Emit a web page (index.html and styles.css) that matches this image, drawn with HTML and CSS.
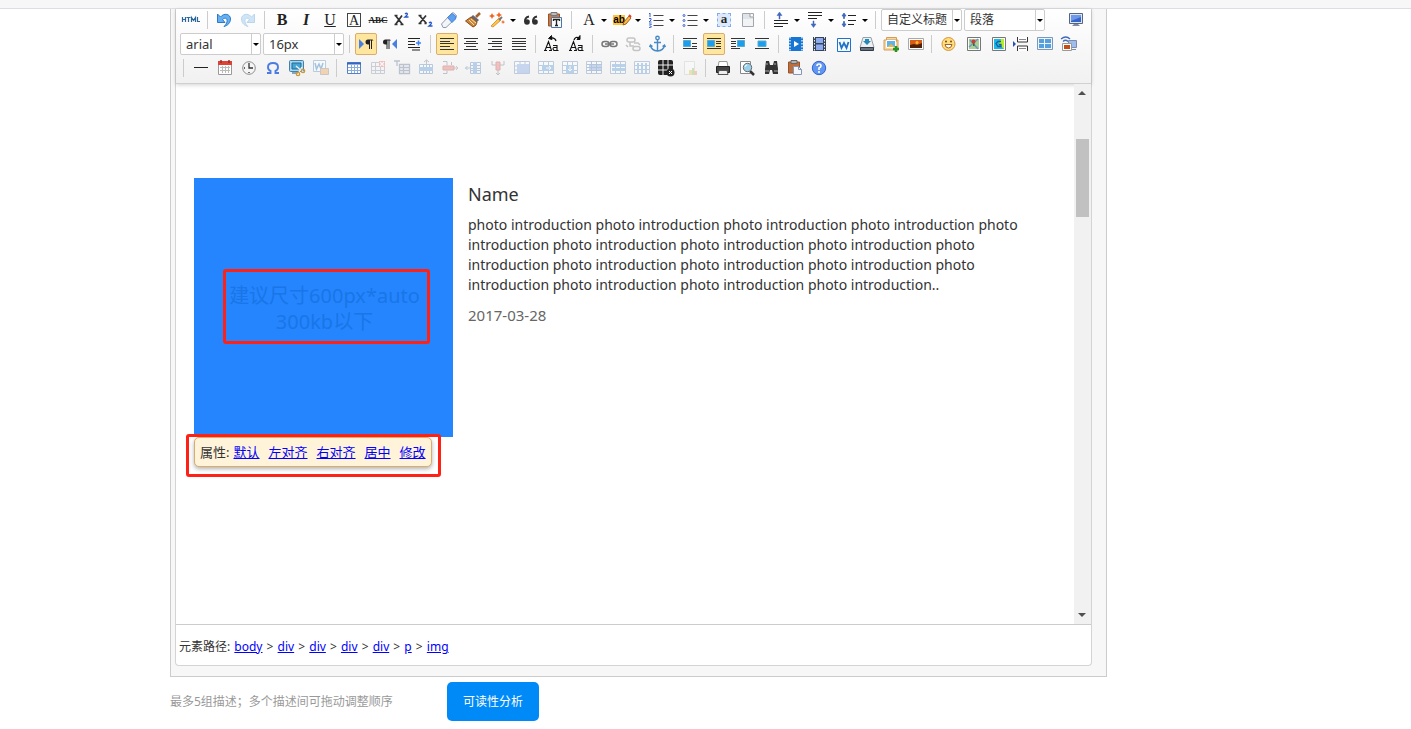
FILE: index.html
```html
<!DOCTYPE html>
<html lang="zh-CN">
<head>
<meta charset="utf-8">
<title>编辑器</title>
<link rel="stylesheet" href="styles.css">
</head>
<body>
<div class="topbar"></div>
<main class="page">
<div class="frame">
<div class="editor">
<div class="toolbar" role="toolbar">
<div class="row">
<button class="tool" aria-label="HTML"><svg viewBox="0 0 20 20" fill="none" stroke="#2a659c" stroke-width="1.2"><path d="M1.5 7v5M4.500 7v5M1.500 9.500h3M5.500 7.500h4M7.500 7.500v4.500M10.500 12V7.500l2 3 2-3V12M16.500 7v4.500H19"/></svg></button>
<i class="sep"></i>
<button class="tool" aria-label="撤销"><svg viewBox="0 0 20 20"><path d="M3.500 4v8.500h7.500l-2.500-3c3-2.500 5-1 4.500 2-.2 2-1.500 3.500-3 5 4-1 6.500-4 6.500-7.500C16.500 4 10 2.500 6.500 7z" fill="#64b0f0" stroke="#2d79c7"/></svg></button>
<button class="tool faint" aria-label="重做"><svg viewBox="0 0 20 20"><path d="M16.500 4v8.500H9l2.500-3c-3-2.500-5-1-4.500 2 .2 2 1.500 3.500 3 5-4-1-6.500-4-6.500-7.500C3.500 4 10 2.500 13.500 7z" fill="#8bc3f0" stroke="#5a9bd6"/></svg></button>
<i class="sep"></i>
<button class="tool glyph bold">B</button>
<button class="tool glyph italic">I</button>
<button class="tool glyph under">U</button>
<button class="tool glyph"><span class="boxed">A</span></button>
<button class="tool glyph strike">ABC</button>
<button class="tool" aria-label="上标"><svg viewBox="0 0 20 20" fill="none"><path d="M4.500 5.500l7 9M11 5.500l-6.500 9M3.500 5.500h3M3.500 14.500h3M9.500 14.500h3" stroke="#333" stroke-width="1.700"/><path d="M14 4q1.500-1.500 2.500 0 0 1-2.500 3h3.500" stroke="#2757c5" stroke-width="1.300"/></svg></button>
<button class="tool" aria-label="下标"><svg viewBox="0 0 20 20" fill="none"><path d="M4.500 5.500l7 8M11 5.500l-6.500 8M3.500 5.500h3M3.500 13.500h3M9.500 13.500h2" stroke="#333" stroke-width="1.700"/><path d="M14 13q1.500-1.500 2.500 0 0 1-2.500 3h3.500" stroke="#2757c5" stroke-width="1.300"/></svg></button>
<button class="tool" aria-label="清除格式"><svg viewBox="0 0 20 20"><path d="M2.500 14L12 4l2-1.500 3.500 3-1 3L7 17.500H4z" fill="#f5f5f7" stroke="#8c9ab4"/><path d="M8.500 7.500L13 3.500l4 3-.5 2.500-3.500 3.500z" fill="#5f9ff0" stroke="#4a83d5"/></svg></button>
<button class="tool" aria-label="格式刷"><svg viewBox="0 0 20 20"><path d="M17 3l-4 4" stroke="#a5622c" stroke-width="2.500"/><path d="M10 5l6 5-2 2-6-5z" fill="#656773"/><path d="M8 7L2.500 11l7.500 6c3-1 3.500-3 4-5z" fill="#c8863d" stroke="#8b4b17"/><path d="M6 10l5 5M8 9l5 4" stroke="#ffe0a0"/></svg></button>
<button class="tool" aria-label="自动排版"><svg viewBox="0 0 20 20"><path d="M4 16l2 1 8-7-2-2z" fill="#ffc640" stroke="#d9964c"/><path d="M12 10l3-3" stroke="#777" stroke-width="2"/><path d="M5 3l1 2 2 1-2 1-1 2-1-2-2-1 2-1zM12 2l1 2 2 1-2 1-1 2-1-2-2-1 2-1zM16 10l.7 1.500 1.500.5-1.500.7L16 14l-.7-1.500-1.500-.5 1.500-.5z" fill="#f36221"/></svg></button><button class="caret" aria-label="更多"></button>
<button class="tool" aria-label="引用"><svg viewBox="0 0 20 20"><g fill="#303030"><circle cx="6" cy="12" r="2.800"/><circle cx="14" cy="12" r="2.800"/></g><path d="M4 12q-.5-4.500 4-5.500M12 12q-.5-4.500 4-5.500" fill="none" stroke="#303030" stroke-width="1.800"/></svg></button>
<button class="tool" aria-label="纯文本粘贴"><svg viewBox="0 0 20 20"><path d="M3.500 4h11v12h-11z" fill="#c77a43" stroke="#995326"/><path d="M6 2.500h6v3H6z" fill="#bbb" stroke="#777"/><path d="M6.500 7.500h10v10h-10z" fill="#f6fbff" stroke="#4b75aa"/><path d="M8.500 11V9.500h6V11M11.500 9.500v6M10 15.500h3" fill="none" stroke="#222" stroke-width="1.300"/></svg></button>
<i class="sep"></i>
<button class="tool glyph">A</button><button class="caret" aria-label="字体颜色"></button>
<button class="tool mark" aria-label="背景色"><span class="ab">ab</span><svg viewBox="0 0 20 20"><path d="M11 15l1-3 5-6 2 2-5 6z" fill="#f6bb48" stroke="#a86020"/><path d="M17 5l2 2" stroke="#e14128" stroke-width="2"/></svg></button><button class="caret" aria-label="更多"></button>
<button class="tool" aria-label="有序列表"><svg viewBox="0 0 20 20" fill="none"><path d="M7.500 5.500h10M7.500 10.500h10M7.500 15.500h10" stroke="#444"/><path d="M3 4l1-1v4M3 8.500h2v1.500L3 12h2.500M3 14h2.500l-1.500 1.500L5.500 17 3 17.500" stroke="#3260d0"/></svg></button><button class="caret" aria-label="更多"></button>
<button class="tool" aria-label="无序列表"><svg viewBox="0 0 20 20" fill="none"><path d="M7.500 5.500h10M7.500 10.500h10M7.500 15.500h10" stroke="#444"/><g stroke="#4064d5"><circle cx="4" cy="5.500" r="1"/><circle cx="4" cy="10.500" r="1"/><circle cx="4" cy="15.500" r="1"/></g></svg></button><button class="caret" aria-label="更多"></button>
<button class="tool mark" aria-label="全选"><span class="all">a</span></button>
<button class="tool" aria-label="清空文档"><svg viewBox="0 0 20 20"><path d="M4.500 3.500h11v13h-11z" fill="#f2f3f5" stroke="#a2a7af"/><path d="M5 4h7v4h3v1H5z" fill="#dfe3ea"/><path d="M12 3v4h4" fill="#fff" stroke="#999"/></svg></button>
<i class="sep"></i>
<button class="tool" aria-label="段前距"><svg viewBox="0 0 20 20"><path d="M8.500 2l2.500 3.500H9V9H8V5.500H6z" fill="#4167bd" stroke="#4167bd" stroke-width=".5"/><path d="M3 10.500h14M3 13.500h14M3 16.500h9" stroke="#222" stroke-width="1.200"/></svg></button><button class="caret" aria-label="更多"></button>
<button class="tool" aria-label="段后距"><svg viewBox="0 0 20 20"><path d="M3 2.500h14M3 5.500h14M3 8.500h9" stroke="#222" stroke-width="1.200"/><path d="M8 11h1v3h2l-2.500 3.500L6 14h2z" fill="#4167bd" stroke="#4167bd" stroke-width=".5"/></svg></button><button class="caret" aria-label="更多"></button>
<button class="tool" aria-label="行间距"><svg viewBox="0 0 20 20"><path d="M5 3l2 3H5.500v2.500h-1V6H3zM5 17l2-3H5.500v-2.500h-1V14H3z" fill="#4167bd" stroke="#4167bd" stroke-width=".8"/><path d="M9 5.500h8M9 10.500h8M9 14.500h6" stroke="#222" stroke-width="1.200"/></svg></button><button class="caret" aria-label="更多"></button>
<i class="sep"></i>
<span class="combo"><select aria-label="自定义标题"><option>自定义标题</option></select></span>
<span class="combo"><select aria-label="段落格式"><option>段落</option></select></span>
<button class="tool last" aria-label="全屏"><svg viewBox="0 0 20 20"><path d="M3.500 3.500h13v10h-13z" fill="#dae5f5" stroke="#59657a"/><path d="M5 5h10v7H5z" fill="#3365cb"/><path d="M5 5h10v2L5 11z" fill="#6e98e9"/><path d="M8 14h4l2 2H6z" fill="#7e8ba1"/></svg></button>
</div>
<div class="row">
<span class="combo"><select class="en" aria-label="字体"><option>arial</option></select></span>
<span class="combo"><select class="en" aria-label="字号"><option>16px</option></select></span>
<i class="sep"></i>
<button class="tool on" aria-label="从左向右"><svg viewBox="0 0 20 20"><path d="M3 5l5 5-5 5z" fill="#477fe2"/><path d="M16.500 5.500H12a2.500 2.500 0 000 5h1V15h1V6.500h1V15h1V6.500h1.500z" fill="#222"/></svg></button>
<button class="tool" aria-label="从右向左"><svg viewBox="0 0 20 20"><path d="M17 5l-5 5 5 5z" fill="#477fe2"/><path d="M10 5.500H5.500a2.500 2.500 0 000 5h1V15h1V6.500h1V15h1V6.500H11z" fill="#222"/></svg></button>
<button class="tool" aria-label="首行缩进"><svg viewBox="0 0 20 20"><path d="M4 4.500h12M4 7.500h7M4 10.500h7M4 13.500h12M8 16h8" stroke="#222" stroke-width="1.200"/><path d="M12 9h5M14.500 6.500v5" stroke="#3a82f4" stroke-width="1.500"/></svg></button>
<i class="sep"></i>
<button class="tool on" aria-label="左对齐"><svg viewBox="0 0 20 20"><path d="M3 4.500h14M3 7.500h10M3 9.500h14M3 12.500h10M3 15.500h14" stroke="#333"/></svg></button>
<button class="tool" aria-label="居中对齐"><svg viewBox="0 0 20 20"><path d="M3 4.500h14M5 7.500h10M3 9.500h14M5 12.500h10M3 15.500h14" stroke="#333"/></svg></button>
<button class="tool" aria-label="右对齐"><svg viewBox="0 0 20 20"><path d="M3 4.500h14M7 7.500h10M3 9.500h14M7 12.500h10M3 15.500h14" stroke="#333"/></svg></button>
<button class="tool" aria-label="两端对齐"><svg viewBox="0 0 20 20"><path d="M3 4.500h14M3 7.500h14M3 9.500h14M3 12.500h14M3 15.500h14" stroke="#333"/></svg></button>
<i class="sep"></i>
<button class="tool" aria-label="字母大写"><svg viewBox="0 0 20 20" fill="none" stroke="#111"><path d="M2 16.500h3M7 16.500h3M3 16.500l3.500-9 3 9M4.500 13.500h4M11 11.500h4v5h-3q-2-2 0-3h3M15 16.500h1.500" stroke-width="1.100"/><path d="M14 7q-1-4-6-3" stroke-width="1.300"/><path d="M9.500 1.500L6.500 4.500l3.500 1z" fill="#111"/></svg></button>
<button class="tool" aria-label="字母小写"><svg viewBox="0 0 20 20" fill="none" stroke="#111"><path d="M3 16.500h3M8 16.500h3M4 16.500l3.500-9 3 9M5.500 13.500h4M12 11.500h4v5h-3q-2-2 0-3h3M16 16.500h1.500" stroke-width="1.100"/><path d="M8 6q1.500-4 5-2" stroke-width="1.300"/><path d="M14 1.500V5.500h-3z" fill="#111"/></svg></button>
<i class="sep"></i>
<button class="tool" aria-label="超链接"><svg viewBox="0 0 20 20" fill="none" stroke="#777" stroke-width="1.500"><rect x="3" y="7.500" width="7" height="5" rx="2.500"/><rect x="11" y="7.500" width="7" height="5" rx="2.500"/><path d="M6 10h9"/></svg></button>
<button class="tool faint" aria-label="取消链接"><svg viewBox="0 0 20 20" fill="none" stroke="#777" stroke-width="1.500"><rect x="4" y="4" width="8" height="4" rx="2"/><rect x="10" y="12.500" width="7" height="4" rx="2"/><path d="M7 8v4h4M11 9h4l2 2M3 11l2 2"/></svg></button>
<button class="tool" aria-label="锚点"><svg viewBox="0 0 20 20" fill="none" stroke="#4589c5" stroke-width="1.400"><circle cx="10.500" cy="4" r="1.700"/><path d="M10.500 6v11M7 8.500h7M3.500 11.500q1 5 7 5.500 6-.5 7-5.500M2.500 13l1-2 2 1.500M15.500 12.500l2-1.500 1 2"/></svg></button>
<i class="sep"></i>
<button class="tool" aria-label="默认浮动"><svg viewBox="0 0 20 20"><path d="M3 4.500h14M3 14.500h14M12 9.500h5M12 12.500h5" stroke="#333"/><path d="M3.500 6.500h7v6h-7z" fill="#1c9eed" stroke="#5aaccf"/></svg></button>
<button class="tool on" aria-label="左浮动"><svg viewBox="0 0 20 20"><path d="M3 4.500h14M3 14.500h14M12 7.500h5M12 9.500h5M12 12.500h5" stroke="#333"/><path d="M3.500 6.500h7v6h-7z" fill="#1c9eed" stroke="#5aaccf"/></svg></button>
<button class="tool" aria-label="右浮动"><svg viewBox="0 0 20 20"><path d="M3 4.500h14M3 14.500h9M3 7.500h5M3 9.500h5M3 12.500h5" stroke="#333"/><path d="M9.500 6.500h7v6h-7z" fill="#1c9eed" stroke="#5aaccf"/></svg></button>
<button class="tool" aria-label="图片居中"><svg viewBox="0 0 20 20"><path d="M3 4.500h14M3 14.500h14" stroke="#333"/><path d="M6 7h8v5.500H6z" fill="#1c9eed" stroke="#5aaccf"/></svg></button>
<i class="sep"></i>
<button class="tool" aria-label="视频"><svg viewBox="0 0 20 20"><path d="M4 3h14v14H4z" fill="#1875d1"/><path d="M5 3v14M17 3v14" stroke="#d4e8ff" stroke-width="1.500" stroke-dasharray="1.500 1.500"/><path d="M9 7l5 3-5 3z" fill="#fff"/></svg></button>
<button class="tool" aria-label="影片"><svg viewBox="0 0 20 20"><path d="M4 3h13v14H4z" fill="#35435b"/><path d="M5.500 3v14M15.500 3v14" stroke="#eee" stroke-dasharray="1.500 1.500"/><path d="M7 4h7v5H7zM7 10.500h7V16H7z" fill="#8eabed"/></svg></button>
<button class="tool" aria-label="Word"><svg viewBox="0 0 20 20"><path d="M4.500 4.500h13v13h-13z" fill="#f5fbff" stroke="#1f72c8"/><path d="M6.500 8l2 6 2.500-5 2.500 5 2-6" fill="none" stroke="#1f72c8" stroke-width="1.800"/></svg></button>
<button class="tool" aria-label="附件"><svg viewBox="0 0 20 20"><path d="M6 3.500h8l3 10H3z" fill="#edf0f3" stroke="#9aa0a8"/><path d="M3.500 13.500h13v3h-13z" fill="#67727c" stroke="#303b45"/><path d="M8 5h4v2h2l-4 4-4-4h2z" fill="#2489b7"/></svg></button>
<button class="tool" aria-label="多图上传"><svg viewBox="0 0 20 20"><path d="M5.500 3.500h10v4h-10zM3 6h14v10H3z" fill="#f3d5a6" stroke="#d69d54"/><path d="M5.500 6.500h9v7h-9z" fill="#5cb4e7" stroke="#fff"/><path d="M6 13l4-3 4 3z" fill="#f0b53c"/><path d="M15 12v6M12 15h6" stroke="#259324" stroke-width="2.500"/></svg></button>
<button class="tool" aria-label="图片"><svg viewBox="0 0 20 20"><path d="M3.500 4.500h15v11h-15z" fill="#fff" stroke="#a9a9a9"/><path d="M5 6h12v8H5z" fill="#d75b14"/><path d="M5 11l4-1 3 1 5-2v5H5z" fill="#4e210b"/><circle cx="12" cy="8.500" r="1.500" fill="#ffb42c"/></svg></button>
<i class="sep"></i>
<button class="tool" aria-label="表情"><svg viewBox="0 0 20 20"><circle cx="10.500" cy="10" r="6.500" fill="#ffdc7c" stroke="#d7953c"/><path d="M7 10.500h7q-.5 3.500-3.500 3.500T7 10.500z" fill="#fff" stroke="#9f6224"/><circle cx="8" cy="7.500" r="1" fill="#754a1b"/><circle cx="13" cy="7.500" r="1" fill="#754a1b"/></svg></button>
<button class="tool" aria-label="地图"><svg viewBox="0 0 20 20"><path d="M5.500 3.500h13v13h-13z" fill="#fff" stroke="#777"/><path d="M7 5h10v10H7z" fill="#a9cf94"/><path d="M7 13l9-8M8 6l8 9" stroke="#6c96c5" stroke-width="1.500"/><path d="M11 7h1.500v5H11z" fill="#337024"/><circle cx="11.500" cy="7.500" r="2" fill="#ce3d35"/></svg></button>
<button class="tool" aria-label="谷歌地图"><svg viewBox="0 0 20 20"><path d="M6.500 3.500h13v13h-13z" fill="#fff" stroke="#777"/><path d="M8 5h10v10H8z" fill="#b6ed2a"/><path d="M8 5h7l-2 5 5 5H8z" fill="#16b9e9"/><path d="M15 7.500h-3l-2 2 2 3h3v-2h-2" fill="none" stroke="#195f9d" stroke-width="1.300"/></svg></button>
<button class="tool" aria-label="分页"><svg viewBox="0 0 20 20"><path d="M7.500 3v5h10V3M7.500 17v-5h10v5" fill="#fff" stroke="#333"/><path d="M9 5.500h7M9 14.500h7" stroke="#888"/><path d="M3 7l3 3-3 3z" fill="#2450bb"/></svg></button>
<button class="tool" aria-label="模板"><svg viewBox="0 0 20 20"><path d="M3.500 3.500h15v12h-15z" fill="#edf4fc" stroke="#7c98b7"/><path d="M5 5h5v4H5zM11 5h6v4h-6zM5 10h5v4H5zM11 10h6v4h-6z" fill="#56a0dd"/></svg></button>
<button class="tool" aria-label="远程图片"><svg viewBox="0 0 20 20"><path d="M10.500 6.500h8v7h-8zM12 15.500h6" fill="#9dbcf0" stroke="#7b8da8"/><path d="M4.500 9.500h9v7h-9z" fill="#fff" stroke="#999"/><path d="M6 11h6v4H6z" fill="#c54c16"/><path d="M3 5q5-4 9 0M5 7.500q2.500-2.500 5 0" fill="none" stroke="#3c69be" stroke-width="1.300"/></svg></button>
</div>
<div class="row">
<i class="sep"></i>
<button class="tool" aria-label="分隔线"><svg viewBox="0 0 20 20"><path d="M4 9.500h14" stroke="#222"/></svg></button>
<button class="tool" aria-label="日期"><svg viewBox="0 0 20 20"><path d="M4.500 4h13v12.500h-13z" fill="#fff" stroke="#9a9a9a"/><path d="M4 3h14v4H4z" fill="#df4137"/><path d="M7 2v3M15 2v3" stroke="#943029" stroke-width="1.500"/><path d="M6 9.500h10M6 12.500h10M8.500 8v7M11.500 8v7M14.500 8v7" stroke="#bbb"/></svg></button>
<button class="tool" aria-label="时间"><svg viewBox="0 0 20 20" fill="none"><circle cx="11" cy="10" r="6.300" fill="#f5f5f5" stroke="#8b8d91"/><path d="M11 5v5h4M6 10h1M11 15v-1" stroke="#333" stroke-width="1.300"/></svg></button>
<button class="tool" aria-label="特殊字符"><svg viewBox="0 0 20 20"><path d="M5 15h3.500v-2Q6 12 6 9q0-4 5-4t5 4q0 3-2.500 4v2H17" fill="none" stroke="#4b7ce2" stroke-width="1.900"/></svg></button>
<button class="tool" aria-label="截图"><svg viewBox="0 0 20 20"><rect x="3.500" y="2.500" width="14" height="11" rx="1" fill="#9fd9f4" stroke="#4a7ea5"/><path d="M6 5h9v6H6z" fill="#43a6d5" stroke="#28698f"/><path d="M6 15h6" stroke="#8aa3bc" stroke-width="2"/><path d="M10 8l7 6M16 9l-4 7" stroke="#eee" stroke-width="1.500"/><circle cx="12" cy="16" r="1.700" fill="none" stroke="#cc9734" stroke-width="1.300"/><circle cx="17" cy="13" r="1.700" fill="none" stroke="#cc9734" stroke-width="1.300"/></svg></button>
<button class="tool faint" aria-label="Word 图片"><svg viewBox="0 0 20 20"><path d="M3.500 2.500h12v11h-12z" fill="#fff" stroke="#5a92cb"/><path d="M5 5l1.500 6L9 6l2 5 2-6" fill="none" stroke="#287ac4" stroke-width="1.500"/><path d="M10.500 10.500h8v6h-8z" fill="#f4a34f" stroke="#888"/></svg></button>
<i class="sep"></i>
<button class="tool" aria-label="插入表格"><svg viewBox="0 0 20 20"><path d="M4.500 4.500h13v11h-13z" fill="#fff" stroke="#5681c6"/><path d="M4 5.500h14" stroke="#3467c4" stroke-width="2"/><path d="M5 9.500h12M5 12.500h12M8.500 7v8M11.500 7v8M14.500 7v8" stroke="#8badd9"/></svg></button>
<button class="tool faint" aria-label="删除表格"><svg viewBox="0 0 20 20"><path d="M4.500 4.500h13v11h-13zM4 8.500h13M4 12.500h13M8.500 5v11M13.500 5v11" fill="none" stroke="#8995ac"/><path d="M12 3h6v6h-6z" fill="#eb6c65"/><path d="M13 4l4 4M17 4l-4 4" stroke="#fff" stroke-width="1.300"/></svg></button>
<button class="tool faint" aria-label="表格前插行"><svg viewBox="0 0 20 20"><path d="M3 3h6M6 3v5M8.500 6.500h10v9h-10zM9 9.500h10M9 12.500h10M12.500 7v8" fill="none" stroke="#667b9a" stroke-width="1.300"/></svg></button>
<button class="tool faint" aria-label="插入行"><svg viewBox="0 0 20 20"><path d="M4.500 6.500h13v9h-13zM8.500 7v9M11.500 2v14M14.500 7v9" fill="#fff" stroke="#6287b9"/><path d="M4 9h14v4H4z" fill="#5e9bdb"/><path d="M9 4l2.500-2L14 4" fill="none" stroke="#777"/></svg></button>
<button class="tool faint" aria-label="删除行"><svg viewBox="0 0 20 20"><path d="M4 3.500h4v4M4 15.500h4v-3M12.500 4v3" fill="none" stroke="#747c89"/><path d="M4 8h11v4H4z" fill="#e77772" stroke="#c54d4d"/><path d="M14 10h5M17 8l2 2-2 2" fill="none" stroke="#888"/></svg></button>
<button class="tool faint" aria-label="插入列"><svg viewBox="0 0 20 20"><path d="M7.500 4.500h10v11h-10zM7 7.500h10M7 10.500h10M7 12.500h10M2 10h5M4.500 8l-2 2 2 2" fill="none" stroke="#6287b9"/><path d="M10 4h4v12h-4z" fill="#5e9bdb"/></svg></button>
<button class="tool faint" aria-label="删除列"><svg viewBox="0 0 20 20"><path d="M5 3v4h4M17 3v4h-4M11 12v5M9 15l2 2 2-2" fill="none" stroke="#747c89"/><path d="M9 4h4v8H9z" fill="#e77772" stroke="#c54d4d"/></svg></button>
<button class="tool faint" aria-label="合并单元格"><svg viewBox="0 0 20 20"><path d="M3.500 3.500h15v12h-15zM3.500 8h3M3.500 12h3M9 4v2M14 4v2" fill="#fff" stroke="#6c91c0"/><path d="M6 6h12v9H6z" fill="#85a8e8"/></svg></button>
<button class="tool faint" aria-label="右并单元格"><svg viewBox="0 0 20 20"><path d="M3.500 3.500h15v12h-15zM3.500 7.500h15M3.500 12.500h15M8.500 3v12M13.500 3v12" fill="#fff" stroke="#6c91c0"/><path d="M7 7h11v6H7z" fill="#5f9fdc"/><path d="M11 10h5M14 8l2 2-2 2" fill="none" stroke="#fff"/></svg></button>
<button class="tool faint" aria-label="下并单元格"><svg viewBox="0 0 20 20"><path d="M3.500 3.500h15v12h-15zM3.500 7.500h15M3.500 12.500h15M8.500 3v12M13.500 3v12" fill="#fff" stroke="#6c91c0"/><path d="M7 7h8v8H7z" fill="#5f9fdc"/><path d="M11 8v5M9 11l2 2 2-2" fill="none" stroke="#fff"/></svg></button>
<button class="tool faint" aria-label="完全拆分单元格"><svg viewBox="0 0 20 20"><path d="M3.500 3.500h15v12h-15z" fill="#fff" stroke="#6c91c0"/><path d="M6 6h12v7H6z" fill="#85a8e8"/><path d="M4 6.500h15M4 9.500h15M4 12.500h15M8.500 3v12M13.500 3v12" stroke="#567db3"/></svg></button>
<button class="tool faint" aria-label="拆分成行"><svg viewBox="0 0 20 20"><path d="M3.500 3.500h15v12h-15zM8.500 3v12M13.500 3v12" fill="#fff" stroke="#6c91c0"/><path d="M5 6h13v3H5zM5 10h13v3H5z" fill="#5f9fdc"/></svg></button>
<button class="tool faint" aria-label="拆分成列"><svg viewBox="0 0 20 20"><path d="M3.500 3.500h15v12h-15zM3.500 7.500h15M3.500 11.500h15" fill="#fff" stroke="#6c91c0"/><path d="M6 5h2v10H6zM10 5h2v10h-2zM14 5h2v10h-2z" fill="#5f9fdc"/></svg></button>
<button class="tool" aria-label="表格背景"><svg viewBox="0 0 20 20"><rect x="3" y="2" width="15" height="15" rx="2" fill="#222"/><path d="M3 7h15M3 12h15M8 2v15M13 2v15" stroke="#eee"/><circle cx="15.500" cy="14.500" r="4" fill="#222"/><path d="M14 13l3 3M17 13l-3 3" stroke="#fff"/></svg></button>
<button class="tool fainter" aria-label="图表"><svg viewBox="0 0 20 20"><path d="M5.500 3.500h10v13h-10z" fill="#fff" stroke="#bbb"/><path d="M10 17v-5h3v5" fill="#d4b72e"/><path d="M13 17v-7h2v7" fill="#78b043"/><path d="M15 17v-4h3v4" fill="#d88032"/></svg></button>
<i class="sep"></i>
<button class="tool" aria-label="打印"><svg viewBox="0 0 20 20"><path d="M7 3.500h8l1 5.500H6z" fill="#fff" stroke="#999"/><path d="M4.500 8.500h13v6h-13z" fill="#444" stroke="#222"/><path d="M7 12.500h8l1 4H6z" fill="#eee" stroke="#555"/></svg></button>
<button class="tool" aria-label="预览"><svg viewBox="0 0 20 20"><path d="M4.500 3.500h10v12h-10z" fill="#fff" stroke="#888"/><path d="M14 13l4 4" stroke="#333" stroke-width="2.500"/><circle cx="11.500" cy="9.500" r="4.200" fill="#9bd1e8" stroke="#64696f"/><path d="M9 9q0-2 2-2" stroke="#fff" fill="none"/></svg></button>
<button class="tool" aria-label="查找替换"><svg viewBox="0 0 20 20"><path d="M6 3h3l1 4h3l1-4h3l1 8v5h-5l-1-4h-2l-1 4H5v-5z" fill="#333"/><path d="M5 13h4M14 13h4M7 5v2M15 5v2" stroke="#aaa"/></svg></button>
<button class="tool" aria-label="粘贴"><svg viewBox="0 0 20 20"><path d="M4.500 4h11v11h-11z" fill="#bc6e3c" stroke="#99542b"/><path d="M7 2.500h6v3H7z" fill="#b3b3b3" stroke="#666"/><path d="M9.500 8.500h5l3 3v5h-8z" fill="#f4f7ff" stroke="#8796b2"/><path d="M14.500 8.500v3h3" fill="none" stroke="#8796b2"/></svg></button>
<button class="tool" aria-label="帮助"><svg viewBox="0 0 20 20"><circle cx="11" cy="10" r="6.700" fill="#5f96f4" stroke="#3462c9"/><path d="M9 8q0-2 2-2t2 2q0 1-2 2v2M11 13v2" fill="none" stroke="#fff" stroke-width="1.600"/></svg></button>
</div>
</div>
<div class="work">
<article class="doc">
<div class="media">
<div class="photo"><p>建议尺寸600px*auto<br>300kb以下</p><span class="ring"></span></div>
<div class="popup">属性: <a href="#">默认</a><a href="#">左对齐</a><a href="#">右对齐</a><a href="#">居中</a><a href="#">修改</a></div>
<span class="ring outer"></span>
</div>
<div class="copy">
<h2>Name</h2>
<p>photo introduction photo introduction photo introduction photo introduction photo introduction photo introduction photo introduction photo introduction photo introduction photo introduction photo introduction photo introduction photo introduction photo introduction photo introduction photo introduction..</p>
<time>2017-03-28</time>
</div>
</article>
<div class="scroll"><i class="up"></i><i class="thumb"></i><i class="down"></i></div>
</div>
<nav class="path">元素路径: <a href="#">body</a> &gt; <a href="#">div</a> &gt; <a href="#">div</a> &gt; <a href="#">div</a> &gt; <a href="#">div</a> &gt; <a href="#">p</a> &gt; <a href="#">img</a></nav>
</div>
</div>
<div class="foot"><span>最多5组描述；多个描述间可拖动调整顺序</span><button class="primary">可读性分析</button></div>
</main>
</body>
</html>
```

FILE: styles.css
```css
*, *::before, *::after { box-sizing: border-box; }
body {
  margin: 0;
  background: #fff;
  color: #333;
  font: 12px/20px "Noto Sans", "Noto Sans CJK SC", sans-serif;
  overflow: hidden;
}
button { font: inherit; border: 0; background: none; padding: 0; }
a { color: #00f; text-decoration: underline; }
.topbar { height: 9px; background: #f7f7f8; border-bottom: 1px solid #dcdee2; }
.page { max-width: 1107px; padding-left: 170px; }
.frame {
  background: #f7f7f7;
  border: 1px solid #ccc;
  border-top: 0;
  padding: 0 14px 10px 4px;
}
.editor {
  background: #fff;
  border: 1px solid #d4d4d4;
  border-top: 0;
  border-radius: 0 0 4px 4px;
}
.toolbar {
  position: relative;
  background: linear-gradient(#fff, #f1f1f1);
  border-bottom: 1px solid #d0d0d0;
  box-shadow: 0 1px 4px rgba(0, 0, 0, 0.18);
  padding: 0 3px 3px;
}
.row { display: flex; align-items: center; height: 24px; }
.row:first-child { height: 22px; margin-bottom: 1px; }
.sep { width: 9px; height: 18px; flex: none; }
.sep::before { content: ""; display: block; width: 1px; height: 18px; margin-left: 4px; background: #ccc; }
.tool {
  position: relative;
  display: flex;
  align-items: center;
  justify-content: center;
  flex: none;
  width: 22px;
  height: 22px;
  margin: 0 1px;
  border: 1px solid transparent;
  border-radius: 2px;
}
.tool svg { width: 20px; height: 20px; flex: none; }
.tool.on { background: #ffe69f; border-color: #dcac6c; }
.faint { opacity: 0.4; }
.fainter { opacity: 0.3; }
.last { margin-left: auto; margin-right: 1px; }
.glyph { font: 16px/20px "Liberation Serif", serif; color: #222; padding-left: 2px; }
.bold { font-weight: bold; }
.italic { font-style: italic; font-weight: bold; }
.under { text-decoration: underline; }
.boxed { border: 1px solid #444; width: 14px; height: 14px; line-height: 13px; font-size: 14px; }
.strike { font-size: 9px; font-weight: bold; text-decoration: line-through; }
.mark svg { position: absolute; }
.ab { background: #ffc43d; color: #000; font: bold 10px/10px "Liberation Sans", sans-serif; margin-right: 6px; }
.all {
  width: 14px;
  height: 14px;
  border: 1px dashed #82aef0;
  background: #dce9fb;
  color: #222;
  font: bold 13px/10px "Liberation Serif", serif;
}
.caret { width: 10px; height: 22px; flex: none; }
.caret::after, .combo::after {
  content: "";
  display: block;
  width: 6px;
  border: 3px solid transparent;
  border-top-color: #000;
  border-bottom: 0;
  margin-left: 1px;
}
.combo {
  display: flex;
  align-items: center;
  width: 81px;
  height: 22px;
  margin: 0 1px;
  border: 1px solid #ccc;
  border-radius: 2px;
  background: #fff;
}
.combo select {
  appearance: none;
  flex: 1;
  min-width: 0;
  height: 20px;
  border: 0;
  border-right: 1px solid #ccc;
  padding: 0 0 0 5px;
  margin: 0;
  background: none;
  color: #333;
  font: inherit;
}
.combo::after { margin-right: 1px; }
.combo .en { font-size: 13px; }
.work { display: flex; height: 540px; }
.doc { flex: 1; display: flex; align-items: flex-start; padding: 94px 25px 0 18px; font-size: 15px; }
.media { position: relative; flex: none; width: 259px; margin-right: 15px; }
.photo {
  position: relative;
  display: flex;
  align-items: center;
  justify-content: center;
  aspect-ratio: 1;
  padding: 2px 0 0 2px;
  background: #2485ff;
  color: #1a75e6;
  font-size: 20px;
  line-height: 26px;
  text-align: center;
}
.photo p { margin: 0; }
.ring { position: absolute; left: 29px; top: 91px; width: 207px; height: 75px; border: 3px solid #ff2115; border-radius: 3px; }
.outer { left: -8px; top: 256px; width: 255px; height: 43px; }
.popup {
  position: absolute;
  left: 0;
  top: 259px;
  display: flex;
  gap: 9px;
  height: 30px;
  padding: 0 5px;
  border: 1px solid #dcac6c;
  border-radius: 5px;
  background: #fff3d9;
  box-shadow: 0 2px 4px rgba(0, 0, 0, 0.3);
  font-size: 13px;
  line-height: 28px;
  white-space: nowrap;
}
.popup a:first-child { margin-left: -5px; }
.copy { flex: 1; }
.copy h2 { margin: 3px 0 8px; font-size: 18px; font-weight: 400; line-height: 26px; }
.copy p { margin: 0 0 10px; font-size: 14px; }
.copy time { color: #666; }
.scroll { position: relative; width: 17px; background: #f1f1f1; }
.scroll i { position: absolute; }
.thumb { left: 2px; top: 55px; width: 13px; height: 78px; background: #c1c1c1; }
.up, .down { left: 4px; border: 4px solid transparent; }
.up { top: 7px; border-top: 0; border-bottom-color: #505050; }
.down { bottom: 7px; border-bottom: 0; border-top-color: #505050; }
.path { border-top: 1px solid #ccc; padding: 12px 3px 8px; }
.path a { margin: 0 1px; }
.foot { display: flex; align-items: center; gap: 54px; padding-top: 5px; color: #999; }
.primary { height: 39px; padding: 0 16px; border-radius: 5px; background: #008af7; color: #fff; }
```
